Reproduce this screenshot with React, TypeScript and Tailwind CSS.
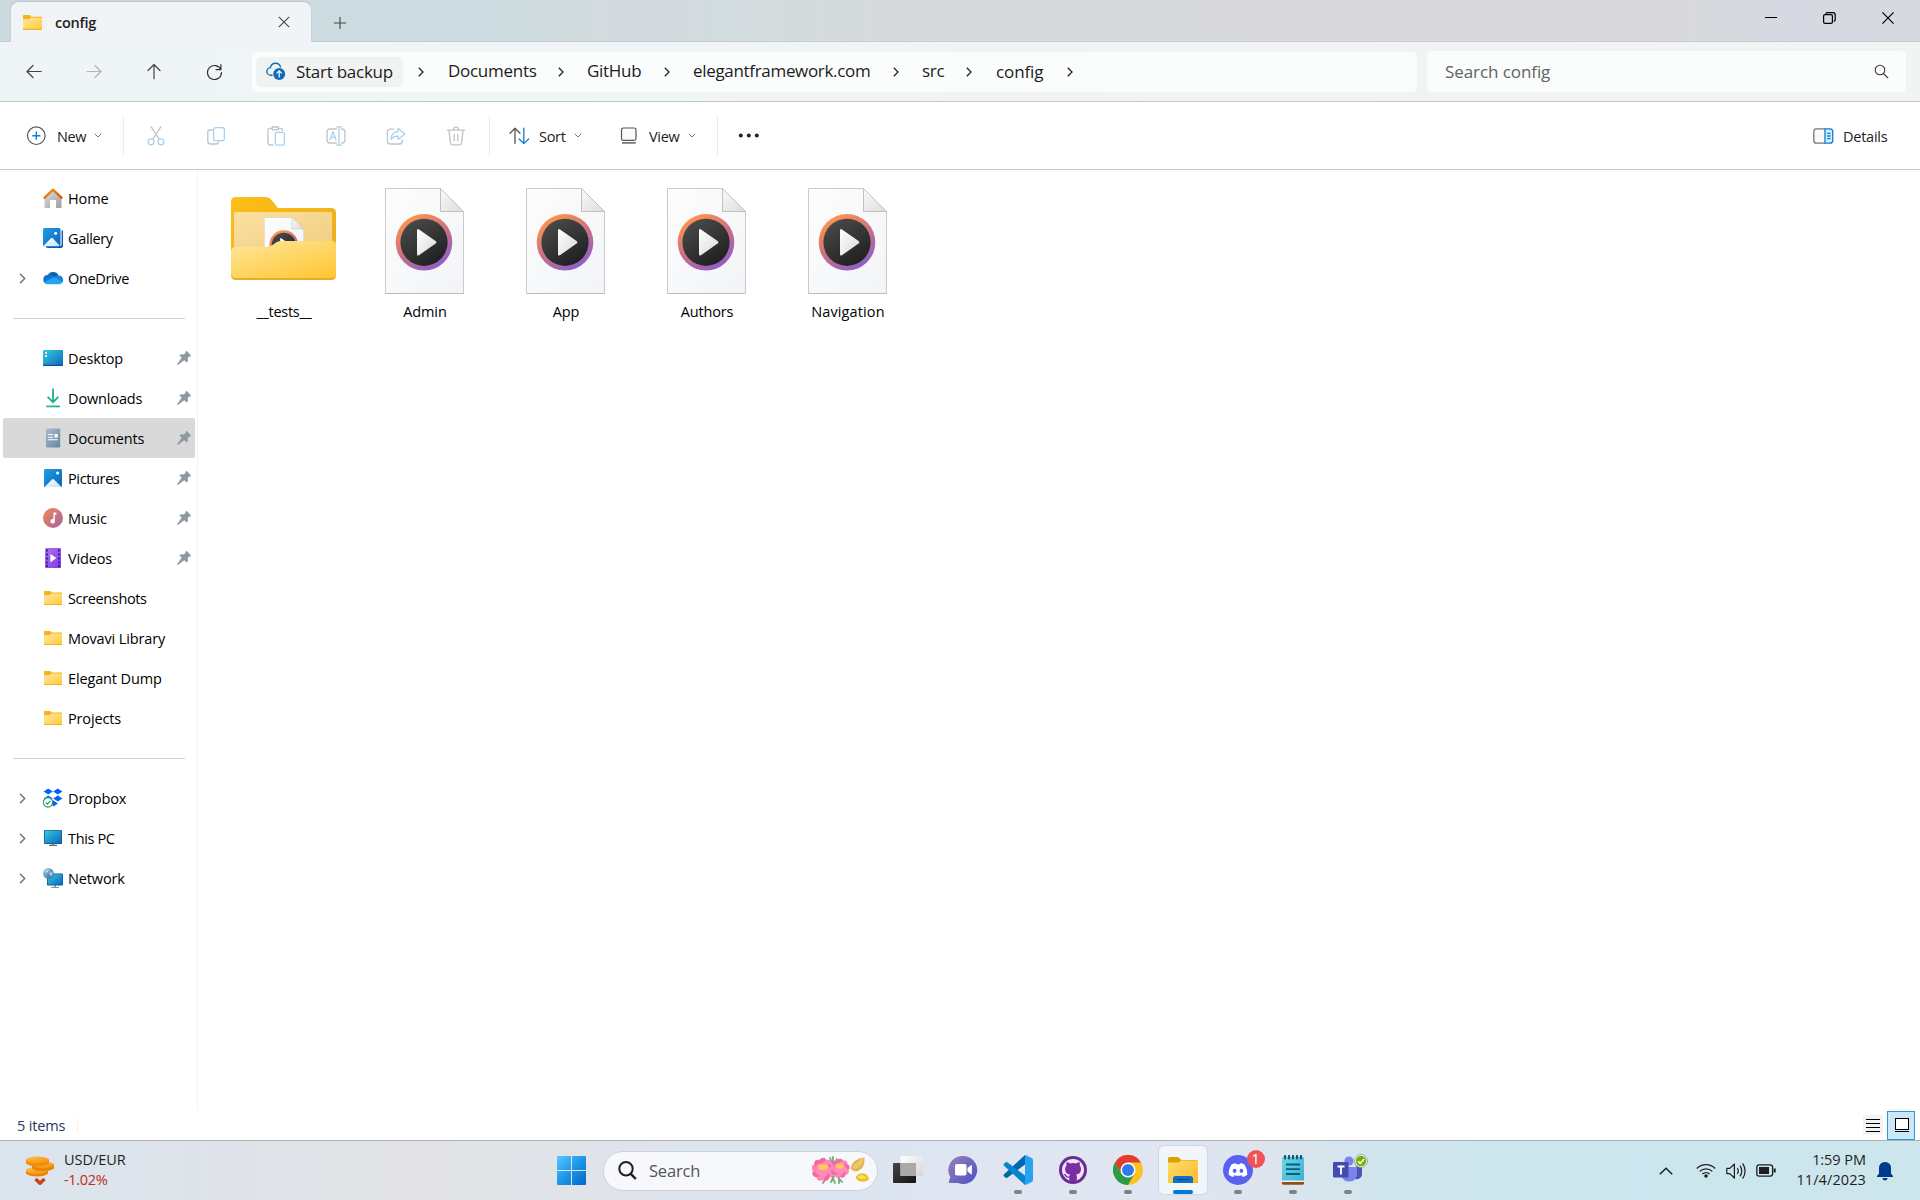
import React from "react";

type P = { className?: string };

const Chevron = ({ className = "" }: P) => (
  <svg className={className} viewBox="0 0 6 10" fill="none" stroke="currentColor" strokeWidth="1.3">
    <path d="M.8.8 5 5 .8 9.2" />
  </svg>
);

const Down = ({ className = "" }: P) => (
  <svg className={"h-[5px] w-2 shrink-0 " + className} viewBox="0 0 8 5" fill="none" stroke="#777" strokeWidth="1">
    <path d="M.8.8 4 4 7.2.8" />
  </svg>
);

const Folder = ({ className = "" }: P) => (
  <svg className={className} viewBox="0 0 18 14">
    <defs>
      <linearGradient id="fold" x1="0" y1="0" x2="1" y2="1">
        <stop offset="0" stopColor="#ffe9a0" />
        <stop offset="1" stopColor="#ffc937" />
      </linearGradient>
    </defs>
    <path d="M0 .8Q0 0 .8 0h5.5l1.6 1.6h9.3q.8 0 .8.8V12H0z" fill="#f5b41c" />
    <path d="M0 4h5.8l1.8-1.4H18v10.6q0 .8-.8.8H.8q-.8 0-.8-.8z" fill="url(#fold)" />
    <path d="M0 13h18v.2q0 .8-.8.8H.8q-.8 0-.8-.8z" fill="#efb225" />
  </svg>
);

/* ---------- title bar and navigation ---------- */

const TitleBar = () => (
  <div className="flex h-[42px] border-b border-[#c4cdd2] bg-[linear-gradient(90deg,#cddbe0_0%,#cddce1_25%,#d2dcde_31%,#d5d9e0_33%,#d2dcde_37%,#d7d9dc_50%,#d9d9dc_70%,#d9d9dc_87%,#d6d9e1_92%,#d7d9e1_100%)]">
    <div className="z-10 ml-[11px] mt-[2px] flex h-10 w-[300px] items-center rounded-t-lg bg-[#f0f4f6] shadow-[0_-1px_2px_rgba(120,140,150,0.25)]">
      <Folder className="ml-3 mt-px h-[15px] w-[19px]" />
      <span className="ml-[13px] w-[223px] translate-y-px text-[14.5px] font-semibold tracking-[-0.25px] text-[#222]">config</span>
      <svg className="h-3 w-3 shrink-0" viewBox="0 0 12 12" stroke="#444" strokeWidth="1.1">
        <path d="M.8.8l10.4 10.4M11.2.8.8 11.2" />
      </svg>
    </div>
    <svg className="ml-[23px] mt-[17px] h-3 w-3" viewBox="0 0 12 12" stroke="#444" strokeWidth="1.1">
      <path d="M6 0v12M0 6h12" />
    </svg>
    <div className="ml-auto mr-[26px] mt-3 flex h-3 gap-[46px]">
      <svg className="h-3 w-3" viewBox="0 0 12 12" stroke="#000" strokeWidth="1"><path d="M0 5.5h12" /></svg>
      <svg className="h-3 w-[13px]" viewBox="0 0 13 12" fill="none" stroke="#000" strokeWidth="1.2">
        <rect x=".6" y="2.7" width="8.8" height="8.7" rx="1.4" />
        <path d="M3 2.6V2q0-1.4 1.4-1.4h5.4q2.4 0 2.4 2.4v5q0 1.2-1.6 1.4" />
      </svg>
      <svg className="h-3 w-3" viewBox="0 0 12 12" stroke="#000" strokeWidth="1.2"><path d="M.4.4l11.2 11.2M11.6.4.4 11.6" /></svg>
    </div>
  </div>
);

const NavIcon = ({ d, color }: { d: string; color: string }) => (
  <svg className="h-4 w-4 shrink-0" viewBox="0 0 16 16" fill="none" stroke={color} strokeWidth="1.2" strokeLinecap="round" strokeLinejoin="round">
    <path d={d} />
  </svg>
);

const crumbs = [
  { name: "Documents", cls: "w-[90px] ml-[24px] mr-[20px] tracking-[-0.28px] -translate-y-px" },
  { name: "GitHub", cls: "w-[56px] ml-[23px] mr-[21px] tracking-[-0.3px] -translate-y-px" },
  { name: "elegantframework.com", cls: "w-[180px] ml-[23px] mr-[20px] tracking-[-0.32px] -translate-y-px" },
  { name: "src", cls: "w-[24px] ml-[23px] mr-[20px] tracking-[-0.3px] -translate-y-px" },
  { name: "config", cls: "w-[50px] ml-[24px] mr-[21px] tracking-[-0.1px]" },
];

const NavBar = () => (
  <div className="flex h-[60px] items-center border-b border-[#c2c9ce] bg-[linear-gradient(90deg,#eff4f6_0%,#f0f5f7_35%,#f1f2f5_50%,#f2f3f5_100%)]">
    <div className="ml-[26px] flex w-[226px] gap-11">
      <NavIcon color="#444" d="M15.200 7.500H1M7 1.500 1 7.500l6 6" />
      <NavIcon color="#b3b6b8" d="M1 7.500h14.200M9 1.500l6 6-6 6" />
      <NavIcon color="#444" d="M8 14.700V.6M2 6.500l6-6 6 6" />
      <NavIcon color="#333" d="M14.900 5.700A7 7 0 1 0 15.500 8.500M14.900.7v5h-4.800" />
    </div>
    <div className="flex h-10 w-[1165px] shrink-0 items-center rounded-[5px] bg-[#fbfdfd] pl-1">
      <div className="flex h-[30px] w-[147px] items-center rounded-[5px] bg-[#f1f3f3]">
        <svg className="ml-[10px] h-[19px] w-[20px] shrink-0" viewBox="0 0 20 19">
          <path d="M6.500 13.200H5a3.800 3.800 0 0 1-.6-7.600C5 2.800 7 1.200 9.600 1.200s4.500 1.700 5.100 4.200" fill="none" stroke="#0f6cbd" strokeWidth="1.4" />
          <circle cx="13.2" cy="12" r="6" fill="#0f6cbd" />
          <path d="M13.200 15.400V9M10.600 11.400l2.600-2.600 2.600 2.600" fill="none" stroke="#fff" strokeWidth="1.2" />
        </svg>
        <span className="ml-[10px] whitespace-nowrap text-[17px] tracking-[-0.26px] text-[#1b1b1b]">Start backup</span>
      </div>
      <Chevron className="ml-[15px] h-[10px] w-[6px] shrink-0 text-[#222]" />
      {crumbs.map((c) => (
        <React.Fragment key={c.name}>
          <span className={"shrink-0 whitespace-nowrap text-[17px] text-[#1b1b1b] " + c.cls}>{c.name}</span>
          <Chevron className="h-[10px] w-[6px] shrink-0 text-[#222]" />
        </React.Fragment>
      ))}
    </div>
    <div className="ml-[10px] flex h-[41px] w-[479px] items-center justify-between rounded-[5px] bg-[#fbfdfd] pl-[18px] pr-[17px]">
      <span className="text-[17px] tracking-[-0.08px] text-[#606262]">Search config</span>
      <svg className="h-[15px] w-[15px]" viewBox="0 0 15 15" fill="none" stroke="#333" strokeWidth="1.1">
        <circle cx="6" cy="6" r="4.8" /><path d="m9.5 9.5 4.6 4.6" />
      </svg>
    </div>
  </div>
);

/* ---------- command bar ---------- */

const G = "#c3c3c3";
const B = "#a5d2f2";

const Tool = ({ children }: { children: React.ReactNode }) => (
  <svg className="h-5 w-5 shrink-0" viewBox="0 0 20 20" fill="none" strokeWidth="1.3" strokeLinecap="round" strokeLinejoin="round">
    {children}
  </svg>
);
const Divider = ({ className = "" }: P) => <div className={"h-10 w-px shrink-0 bg-[#ececec] " + className} />;

const Toolbar = () => (
  <div className="flex h-[68px] items-center border-b border-[#c3c9ce] bg-white text-[14.5px] text-[#222]">
    <div className="flex w-[123px] items-center">
      <svg className="ml-[26px] h-5 w-5 shrink-0" viewBox="0 0 20 20" fill="none" strokeWidth="1.2">
        <circle cx="10.300" cy="9.700" r="8.800" stroke="#555" />
        <path d="M10.300 5.600v8.200M6.200 9.700h8.200" stroke="#0f7bd4" strokeWidth="1.4" />
      </svg>
      <span className="ml-[11px] w-[37px] translate-y-px tracking-[-0.35px]">New</span>
      <Down />
    </div>
    <Divider />
    <div className="ml-[22px] flex w-[343px] gap-10">
      <Tool>
        <path d="M5.2.8 13 13M14.8.8 7 13" stroke={G} />
        <circle cx="5" cy="15.8" r="3" stroke={B} /><circle cx="15" cy="15.8" r="3" stroke={B} />
      </Tool>
      <Tool>
        <path d="M6.5 4H4Q1.8 4 1.8 6.2v9q0 2.8 2.8 2.8h5.6q1.8 0 2.2-2" stroke={G} />
        <rect x="7.6" y="1.6" width="10.8" height="13" rx="2.2" stroke={B} />
      </Tool>
      <Tool>
        <path d="M7 19H4Q2 19 2 17V4.4q0-2 2-2h2M12.5 2.4h2q2 0 2 2M6.2 1h6v2.8h-6z" stroke={G} />
        <rect x="9.4" y="6.4" width="9" height="12.8" rx="1.6" stroke={B} />
      </Tool>
      <Tool>
        <path d="M10.5 3H4Q1 3 1 6v8q0 3 3 3h6.5M15.6 3Q19 3 19 6v8q0 3-3.4 3" stroke={G} />
        <path d="M13 1v18M10.8.8h4.6M10.8 19.2h4.6M4 14l3-8.4L10 14M5 11.4h4" stroke={B} />
      </Tool>
      <Tool>
        <path d="M7.6 3.2H4.4q-3 0-3 3V15q0 3 3 3h9q3 0 3-3v-.8" stroke={G} />
        <path d="M12 2.2 18.8 8 12 13.4v-3.2q-4.4-.2-7 3Q5.400 6 12 5.400z" stroke={B} />
      </Tool>
      <Tool>
        <path d="M1.400 4.200h17.200M7.500 4q.2-2.800 2.500-2.800T12.500 4M3 4.400l1.400 12.400q.2 2 2.200 2h6.800q2 0 2.200-2L17 4.400M8.200 8.500v6M11.800 8.500v6" stroke={G} />
      </Tool>
    </div>
    <Divider />
    <svg className="ml-[19px] h-[18px] w-[21px]" viewBox="0 0 21 18" fill="none" strokeWidth="1.3" strokeLinecap="round" strokeLinejoin="round">
      <path d="M6 16.500V1.200M1 6.200l5-5 5 5" stroke="#555" />
      <path d="M14.800 1.200v15.300M10.200 12l4.600 4.600L19.600 12" stroke="#0f7bd4" />
    </svg>
    <span className="ml-[9px] w-[36px] translate-y-px tracking-[-0.3px]">Sort</span>
    <Down className="-translate-x-px" />
    <svg className="ml-[37px] h-[17px] w-[18px]" viewBox="0 0 18 17" fill="none" stroke="#555" strokeWidth="1.2">
      <rect x="1.500" y="1" width="14.500" height="12.400" rx="1.800" fill="#fafafa" /><path d="M2 15.900h13.800" strokeWidth="1.400" />
    </svg>
    <span className="ml-[11px] w-[39px] translate-y-px tracking-[-0.3px]">View</span>
    <Down />
    <Divider className="ml-[21px]" />
    <svg className="ml-5 h-[5px] w-[22px]" viewBox="0 0 22 5" fill="#222">
      <circle cx="2.800" cy="2.500" r="2" /><circle cx="10.800" cy="2.500" r="2" /><circle cx="18.800" cy="2.500" r="2" />
    </svg>
    <svg className="ml-auto h-4 w-[21px]" viewBox="0 0 21 16" fill="none" strokeWidth="1.300">
      <path d="M12 .8H3.500Q.8.800.8 3.500v9q0 2.700 2.700 2.700H12" stroke="#777" fill="#fafafa" />
      <path d="M12 .8h5q2.700 0 2.700 2.700v9q0 2.700-2.700 2.700h-5z" stroke="#0f7bd4" fill="#d9effc" />
      <path d="M14.200 5.300h3.400M14.200 8h3.400M14.200 10.700h3.400" stroke="#0f7bd4" />
    </svg>
    <span className="ml-[9px] mr-[32px] w-[45px] translate-y-px tracking-[-0.25px]">Details</span>
  </div>
);

/* ---------- sidebar ---------- */

const Grad = ({ id, a, b }: { id: string; a: string; b: string }) => (
  <linearGradient id={id} x1="0" y1="0" x2="1" y2="1">
    <stop offset="0" stopColor={a} /><stop offset="1" stopColor={b} />
  </linearGradient>
);

const sideIcons: Record<string, React.ReactNode> = {
  home: (
    <>
      <defs><Grad id="hm" a="#dcdcdc" b="#a0a0a0" /><Grad id="hr" a="#f59a12" b="#d94a0c" /></defs>
      <path d="M1.500 9 10 2l8.500 7v10.200q0 .8-.8.800H13v-8H7v8H2.300q-.8 0-.8-.800z" fill="url(#hm)" />
      <path d="M.8 10.400 10 1.600l9.200 8.800" fill="none" stroke="url(#hr)" strokeWidth="2.200" strokeLinejoin="round" />
    </>
  ),
  gallery: (
    <>
      <defs><Grad id="gl" a="#1f9fe6" b="#0a62bb" /><Grad id="gm" a="#ffffff" b="#c4e3f8" /></defs>
      <path d="M3 18h14q1.600 0 1.600-1.600V2.500H20V18q0 2-2 2H4.500Q3 20 3 18z" fill="#0c5ca8" />
      <rect width="17.500" height="18.200" rx="1.500" fill="url(#gl)" />
      <path d="m.8 17.600 7.200-7.400q.9-.8 1.800 0l6.800 7.400q-.4.600-1.200.600H1.800q-.7 0-1-.600z" fill="url(#gm)" />
      <circle cx="12.600" cy="5.200" r="1.500" fill="#fff" />
    </>
  ),
  onedrive: (
    <>
      <path d="M4.600 7.400a6.200 6.200 0 0 1 11 0l-4 5L3 9z" fill="#0a5fb4" />
      <path d="M4.500 7q4-1.500 8 2l-9 6.800A4.500 4.500 0 0 1 4.500 7z" fill="#0f74d0" />
      <path d="M11 10q2-3.200 5-2.400A4.200 4.200 0 0 1 19.200 14.500L9 12z" fill="#1687dd" />
      <path d="M1.500 14.400q2-2 9.800-5.200l8.200 4.800q-1 2.200-3.200 2.200H4.500q-2 0-3-1.800z" fill="#27a5ec" />
    </>
  ),
  desktop: (
    <>
      <defs><Grad id="dk" a="#35cbe0" b="#0b67bd" /></defs>
      <rect y="2" width="20" height="16" rx="1" fill="url(#dk)" />
      <path d="M0 16.800h20V17q0 1-1 1H1q-1 0-1-1z" fill="#0a4f97" />
      <path d="M2.200 4h1.800v1.800H2.200zM2.200 7.200h1.800V9H2.200z" fill="#fff" />
    </>
  ),
  downloads: (
    <>
      <defs><Grad id="dl" a="#3fc99a" b="#0a9c8a" /></defs>
      <path d="M10 .6v13.200M4.600 8.800 10 14.200l5.400-5.400" fill="none" stroke="#1bb08f" strokeWidth="1.800" />
      <rect x="3" y="17.400" width="14" height="1.800" rx=".6" fill="url(#dl)" />
    </>
  ),
  documents: (
    <>
      <defs><Grad id="dc" a="#a9bdd3" b="#66849f" /></defs>
      <rect x="3" y=".5" width="14.200" height="19" rx="1.200" fill="url(#dc)" />
      <path d="M5.200 6.500h5M5.200 9.200h5M5.200 11.800h9.600" stroke="#fff" strokeWidth="1.100" />
      <rect x="11.500" y="6" width="3.300" height="3.600" fill="#fff" />
    </>
  ),
  pictures: (
    <>
      <defs><Grad id="pc" a="#1f9fe6" b="#0a62bb" /><Grad id="pm" a="#ffffff" b="#c4e3f8" /></defs>
      <rect x="1" y="1" width="18" height="18" rx="1.200" fill="url(#pc)" />
      <path d="m2 18.400 7-7q1-.8 2 0l7 7q-.2.600-1 .600H3q-.8 0-1-.600z" fill="url(#pm)" />
      <circle cx="14.600" cy="5" r="1.600" fill="#fff" />
    </>
  ),
  music: (
    <>
      <defs><Grad id="mu" a="#f08a4b" b="#a763a6" /></defs>
      <circle cx="10" cy="10" r="10" fill="url(#mu)" />
      <path d="M10.400 4.500h3v2.200h-1.500v6.500a2.200 2.200 0 1 1-1.500-2z" fill="#fff" />
    </>
  ),
  videos: (
    <>
      <defs><Grad id="vd" a="#b072f4" b="#7c3be0" /></defs>
      <rect x="2" y="0" width="16" height="20" rx="1" fill="url(#vd)" />
      <path d="M3 2.500h2M3 6.500h2M3 10.500h2M3 14.500h2M3 18h2M15 2.500h2M15 6.500h2M15 10.500h2M15 14.500h2M15 18h2" stroke="#43208a" strokeWidth="1.800" />
      <path d="m7.400 6 6 4-6 4.200z" fill="#fff" />
    </>
  ),
  dropbox: (
    <>
      <path d="m5.200.5 4.600 3-4.600 3-4.600-3zM14.800.5l4.600 3-4.600 3-4.600-3zM5.200 7.500l4.600 3-4.600 3-4.600-3zM14.800 7.500l4.600 3-4.600 3-4.600-3zM10.500 12.600l4.400 3-4 2.600-4.500-3z" fill="#0061fe" />
      <circle cx="5" cy="14.400" r="4.700" fill="#fff" stroke="#1f9d62" strokeWidth="1.100" />
      <path d="m2.800 14.500 1.600 1.600 2.900-3.200" fill="none" stroke="#1f9d62" strokeWidth="1.200" />
    </>
  ),
  pc: (
    <>
      <defs><Grad id="tp" a="#32cbdc" b="#0b66bf" /></defs>
      <path d="M8.500 16h3v2h-3z" fill="#9aa5ad" /><path d="M6 16.800h8V18H6z" fill="#5e6870" />
      <rect x="1" y="2" width="18" height="14" rx=".8" fill="#0a5b9e" />
      <rect x="1.800" y="2.600" width="16.400" height="12.600" fill="url(#tp)" />
    </>
  ),
  network: (
    <>
      <defs><Grad id="nw" a="#32cbdc" b="#0b66bf" /><Grad id="gb" a="#a9d4ec" b="#275f90" /></defs>
      <path d="M11 17h2v2h-2z" fill="#9aa5ad" /><path d="M8 19h8v1H8z" fill="#8c969e" />
      <rect x="4" y="5.500" width="16" height="12" rx=".8" fill="#0a5b9e" />
      <rect x="4.800" y="6.300" width="14.400" height="10.400" fill="url(#nw)" />
      <circle cx="5.400" cy="5.400" r="5.400" fill="url(#gb)" />
      <path d="M2 3q2-2 4-1.500L5 4 3 5zM6 5l3-1 1 2-2 3z" fill="#dbeef8" opacity=".6" />
    </>
  ),
};

type Row = { label: string; icon: string; pin?: boolean; chev?: boolean; sel?: boolean; tight?: boolean };
const groups: Row[][] = [
  [
    { label: "Home", icon: "home" },
    { label: "Gallery", icon: "gallery", tight: true },
    { label: "OneDrive", icon: "onedrive", chev: true, tight: true },
  ],
  [
    { label: "Desktop", icon: "desktop", pin: true },
    { label: "Downloads", icon: "downloads", pin: true },
    { label: "Documents", icon: "documents", pin: true, sel: true },
    { label: "Pictures", icon: "pictures", pin: true, tight: true },
    { label: "Music", icon: "music", pin: true },
    { label: "Videos", icon: "videos", pin: true },
    { label: "Screenshots", icon: "folder", tight: true },
    { label: "Movavi Library", icon: "folder" },
    { label: "Elegant Dump", icon: "folder" },
    { label: "Projects", icon: "folder" },
  ],
  [
    { label: "Dropbox", icon: "dropbox", chev: true },
    { label: "This PC", icon: "pc", chev: true, tight: true },
    { label: "Network", icon: "network", chev: true },
  ],
];

const Sidebar = () => (
  <div className="w-[198px] shrink-0 border-r border-[#f5f5f5] pt-2">
    {groups.map((g, i) => (
      <React.Fragment key={i}>
        {i > 0 && (
          <div className="h-10 pl-[13px] pt-5"><div className="h-px w-[172px] bg-[#d2d2d2]" /></div>
        )}
        {g.map((r) => (
          <div key={r.label} className={"ml-[3px] flex h-10 w-[192px] items-center rounded-[2px] pl-4 " + (r.sel ? "bg-[#d9d9d9]" : "")}>
            <span className="w-6 shrink-0">{r.chev && <Chevron className="h-[11px] w-[7px] text-[#777]" />}</span>
            {r.icon === "folder" ? (
              <Folder className="mx-px h-[14px] w-[18px] shrink-0" />
            ) : (
              <svg className="h-5 w-5 shrink-0" viewBox="0 0 20 20">{sideIcons[r.icon]}</svg>
            )}
            <span className={"ml-[5px] w-[109px] shrink-0 translate-y-px whitespace-nowrap text-[14.5px] text-black " + (r.tight ? "tracking-[-0.36px]" : "tracking-[-0.14px]")}>{r.label}</span>
            {r.pin && (
              <svg className="h-[14px] w-[14px] shrink-0" viewBox="0 0 13 13" fill="#8e9aa2">
                <path d="M8.200.3q.7-.5 1.300.1l3.200 3.200q.5.600 0 1.200-.7.500-1.400.2L9.900 6.600q.9 2.600-.8 4.100L6.700 8.600.8 13 0 12.300 4.400 6.300 2.100 4q1.600-1.500 4.100-.8l1.900-1.500Q7.800.8 8.200.3z" />
              </svg>
            )}
          </div>
        ))}
      </React.Fragment>
    ))}
  </div>
);

/* ---------- files ---------- */

const MediaDoc = ({ className = "" }: P) => (
  <svg className={className} viewBox="0 0 79 106">
    <defs>
      <Grad id="page" a="#fdfdfd" b="#f2f4f7" />
      <Grad id="curl" a="#fafafa" b="#dcdcdc" />
      <linearGradient id="ring" x1=".2" y1=".05" x2=".75" y2="1">
        <stop offset="0" stopColor="#ff9648" /><stop offset=".5" stopColor="#c96f86" /><stop offset="1" stopColor="#875dd0" />
      </linearGradient>
      <linearGradient id="disc" x1=".2" y1="0" x2=".8" y2="1">
        <stop offset="0" stopColor="#4b4b4b" /><stop offset="1" stopColor="#1d1d1d" />
      </linearGradient>
      <Grad id="tri" a="#ffffff" b="#d9d9d9" />
    </defs>
    <path d="M.5.5h55l23 23v82H.5z" fill="url(#page)" stroke="#cacaca" />
    <path d="M.5 105.500h78" stroke="#bcbcbc" />
    <path d="M55.500.5v23h23z" fill="url(#curl)" stroke="#c0c0c0" strokeLinejoin="round" />
    <circle cx="39" cy="54.300" r="28.300" fill="url(#ring)" />
    <circle cx="39" cy="54.300" r="23.600" fill="url(#disc)" />
    <path d="M32 42.500q0-2.300 2-1.100l16.600 11.700q1.500 1.200 0 2.400L34 67.200q-2 1.200-2-1.100z" fill="url(#tri)" />
  </svg>
);

const BigFolder = () => (
  <div className="relative h-[83px] w-[105px]">
    <svg className="absolute inset-0 h-[83px] w-[105px]" viewBox="0 0 105 83">
      <defs>
        <Grad id="fb" a="#fdbf17" b="#eaa91f" />
        <Grad id="fi" a="#fbe0a0" b="#efcd80" />
      </defs>
      <path d="M0 5q0-5 5-5h29q4 0 6.500 3l6.500 8h53q5 0 5 5v60H0z" fill="url(#fb)" />
      <path d="M3 17q0-2 2-2h94q2 0 2 2v45H3z" fill="url(#fi)" />
    </svg>
    <div className="absolute left-[33px] top-[20px] h-[40px] w-[40px] overflow-hidden">
      <MediaDoc className="h-[54px] w-10" />
    </div>
    <svg className="absolute inset-0 h-[83px] w-[105px]" viewBox="0 0 105 83">
      <defs>
        <linearGradient id="ff" x1=".1" y1="0" x2=".9" y2="1">
          <stop offset="0" stopColor="#ffe597" /><stop offset="1" stopColor="#ffc734" />
        </linearGradient>
      </defs>
      <path d="M0 54h105v24q0 5-5 5H5q-5 0-5-5z" fill="#e8ac2b" />
      <path d="M0 54.500Q0 50 4.500 50h30q4 0 7-2l4-2.800q2-1.200 5-1.200H101q4 0 4 4v28q0 5-5 5H5q-5 0-5-5z" fill="url(#ff)" />
    </svg>
  </div>
);

const Files = () => (
  <div className="flex items-start pl-[15px] pt-[18px]">
    {["__tests__", "Admin", "App", "Authors", "Navigation"].map((n, i) => (
      <div key={n} className="flex w-[141px] flex-col items-center">
        <div className={"flex h-[106px] items-start " + (i ? "" : "pt-[9px]")}>
          {i ? <MediaDoc className="h-[106px] w-[79px]" /> : <BigFolder />}
        </div>
        <span className={"ml-px mt-[7px] text-[14.5px] leading-[21px] text-black " + (i === 0 ? "tracking-[-0.3px]" : i === 4 ? "tracking-[0.12px]" : "tracking-[-0.14px]")}>{n}</span>
      </div>
    ))}
  </div>
);

/* ---------- status bar ---------- */

const StatusBar = () => (
  <div className="flex h-[30px] shrink-0 items-center bg-white pl-[17px] pr-[5px]">
    <span className="w-[60px] translate-y-px text-[14.5px] tracking-[-0.14px] text-[#1e395b]">5 items</span>
    <div className="h-[14px] w-px bg-[#f0f0f0]" />
    <div className="ml-auto flex h-5 w-5 flex-col items-center justify-center gap-[3px] bg-[#f3f3f3]">
      <div className="h-px w-[14px] bg-black" /><div className="h-px w-[14px] bg-black" />
      <div className="h-px w-[14px] bg-black" /><div className="h-px w-[14px] bg-black" />
    </div>
    <div className="ml-1 flex h-[29px] w-7 flex-col items-center justify-center gap-px border border-[#2a9bd6] bg-[#cbe8f6] pl-[2px]">
      <div className="h-3 w-[14px] border border-black bg-white" /><div className="h-px w-[14px] bg-black" />
    </div>
  </div>
);

/* ---------- taskbar ---------- */

const Coins = () => (
  <svg className="h-[30px] w-[29px]" viewBox="0 0 29 30">
    <defs><Grad id="cn" a="#ffc04a" b="#f58f0a" /></defs>
    <path d="M0 14.500v3q3 3 11 3t11-3v-3z" fill="#e88409" /><ellipse cx="11" cy="14.500" rx="11" ry="3.400" fill="url(#cn)" />
    <path d="M6 8.500v4q3 2.500 11 2.500t11-2.500v-4z" fill="#e88409" /><ellipse cx="17" cy="8.800" rx="11" ry="3.200" fill="url(#cn)" />
    <path d="M0 3.800v3.600q3 3 11.500 3T23 7.400V3.800z" fill="#f08f0c" /><ellipse cx="11.500" cy="3.800" rx="11.500" ry="3.400" fill="url(#cn)" />
    <path d="m9.500 23 4.500 4.200 4.500-4.200" fill="none" stroke="#c8421a" strokeWidth="3.400" strokeLinejoin="round" />
  </svg>
);

const Petals = ({ cx, cy, r }: { cx: number; cy: number; r: number }) => (
  <g>
    {[0, 40, 80, 120, 160, 200, 240, 280, 320].map((a) => (
      <ellipse key={a} cx={cx} cy={cy - r * 0.58} rx={r * 0.36} ry={r * 0.44} fill={a % 80 ? "#ff86b8" : "#fa66a3"} transform={`rotate(${a} ${cx} ${cy})`} />
    ))}
    {[20, 92, 164, 236, 308].map((a) => (
      <ellipse key={a} cx={cx} cy={cy - r * 0.3} rx={r * 0.3} ry={r * 0.36} fill="#ff8dba" transform={`rotate(${a} ${cx} ${cy})`} />
    ))}
    <ellipse cx={cx} cy={cy - 2.500} rx={r * 0.42} ry={r * 0.28} fill="#ffc85a" />
  </g>
);

const Flowers = () => (
  <svg className="h-[30px] w-[58px] shrink-0" viewBox="0 0 58 30">
    <path d="m21 9-3-7M21 9V1M22 9l3-6M14 22l-3 5M20 20l3 7M25 20l5 6M22 20l-3 6M27 21v6" stroke="#7da57c" strokeWidth="1.800" strokeLinecap="round" fill="none" />
    <Petals cx={11} cy={13.500} r={11.500} />
    <Petals cx={28} cy={12.500} r={9.500} />
    <path d="M38.500 12.500Q40 3 52.500 1.500q1 11-7 13.500-4 1-7-2.500z" fill="#e2b34c" />
    <path d="M40 12q4-7 12-10-1.500 8-7.500 10.500-2.500.8-4.500-.5z" fill="#efc768" />
    <path d="M43.500 21q4-5 9-3.500 4 1.500 4.500 6-5 3.500-10 1.500-3-1.200-3.500-4z" fill="#edc21f" />
    <path d="m45 21 5-2 5 3-5 1z" fill="#fbe36a" />
  </svg>
);

const chrome = (
  <>
    <circle cx="15" cy="15" r="15" fill="#fcc31e" />
    <path d="M15 7.500h13A15 15 0 0 0 2 7.500l6.500 11.200z" fill="#e33b2e" />
    <path d="m8.500 18.700 6.500 3.800 6.500-3.800L15 30A15 15 0 0 1 2 7.500z" fill="#2a9b48" />
    <circle cx="15" cy="15" r="7.500" fill="#fff" /><circle cx="15" cy="15" r="6" fill="#2f7bed" />
  </>
);

const taskIcons: { name: string; art: React.ReactNode; state: "none" | "open" | "active" }[] = [
  {
    name: "tasks", state: "none",
    art: (
      <>
        <defs><Grad id="tv" a="#454545" b="#141414" /><Grad id="tw" a="#ffffff" b="#d6d6d6" /></defs>
        <rect y="8" width="23" height="20" rx="1" fill="url(#tv)" />
        <rect x="7.500" y="1" width="22.500" height="20" rx="1" fill="url(#tw)" />
        <path d="M7.500 8H23v13H7.500z" fill="#a9a9a9" />
      </>
    ),
  },
  {
    name: "chat", state: "none",
    art: (
      <>
        <defs><Grad id="ch" a="#9a7fb8" b="#4a52c4" /></defs>
        <path d="M15 1a14 14 0 1 1-5 27H1.500q-1-.3-.6-1.300L2.300 22A14 14 0 0 1 15 1z" fill="url(#ch)" />
        <rect x="7" y="9" width="11.500" height="11.500" rx="1.800" fill="#fff" />
        <path d="m19.500 13 3.600-2.700q.8-.3.8.5v8q0 .8-.8.500l-3.600-2.700z" fill="#fff" />
      </>
    ),
  },
  {
    name: "code", state: "open",
    art: (
      <>
        <path d="M22 0 1 19.300q-1 1 0 2l1.700 1.500q.8.500 1.600 0L22 9.500z" fill="#0068ac" />
        <path d="M22 30 1 10.700q-1-1 0-2l1.700-1.500q.8-.5 1.600 0L22 20.500z" fill="#0885cf" />
        <path d="M22 0q1 0 1.700.4l5 2.600q1.300.6 1.300 2v20q0 1.400-1.300 2l-5 2.600Q23 30 22 29.800z" fill="#27a3f0" />
      </>
    ),
  },
  {
    name: "github", state: "open",
    art: (
      <>
        <circle cx="15" cy="15" r="14" fill="#6e2a97" />
        <circle cx="15" cy="15" r="11" fill="#efe6f4" />
        <path d="M11.200 25.600v-3q-3.400.6-4.200-1.800-.5-1-1.500-1.600 2-.5 3 1.200t2.800 1q.1-1.200.8-1.800-5-.6-5-5.600 0-2.200 1.400-3.500-.5-1.600.2-3.500 1.600 0 3.500 1.500 3-.8 5.800 0 2-1.500 3.500-1.500.7 1.900.2 3.500 1.300 1.300 1.300 3.500 0 5-5 5.600.9.800.9 2.700v3.300Q15 26.600 11.200 25.600z" fill="#7a2ea3" />
      </>
    ),
  },
  { name: "chrome", state: "open", art: chrome },
  {
    name: "explorer", state: "active",
    art: (
      <>
        <defs><Grad id="te" a="#ffdc6a" b="#fdb92b" /></defs>
        <path d="M0 3.500Q0 2 1.500 2h7.800q1.200 0 2 1l2 2h15.200q1.500 0 1.500 1.500V12H0z" fill="#e0a003" />
        <path d="M0 7.500h9.500q1.500 0 2.500-1l1-1h17V28H0z" fill="url(#te)" />
        <path d="M5 28v-4.500Q5 21 7.500 21h15q2.500 0 2.500 2.500V28z" fill="#0f6fc6" />
        <path d="M9 24.500h12" stroke="#0a4a8c" strokeWidth="1.300" />
      </>
    ),
  },
  {
    name: "discord", state: "open",
    art: (
      <>
        <circle cx="15" cy="15" r="15" fill="#5763f0" />
        <path d="M8.500 9.500Q11 8.200 12.700 8.300l.6 1h3.400l.6-1Q19 8.200 21.500 9.500q3.200 5 2.800 10.300-2.300 1.700-4.600 2.200l-1-1.700q-3.700 1-7.400 0l-1 1.700q-2.300-.5-4.600-2.200Q5.300 14.500 8.500 9.500z" fill="#fff" />
        <ellipse cx="11.600" cy="15.800" rx="1.900" ry="2.100" fill="#5763f0" /><ellipse cx="18.400" cy="15.800" rx="1.900" ry="2.100" fill="#5763f0" />
      </>
    ),
  },
  {
    name: "notepad", state: "open",
    art: (
      <>
        <defs><Grad id="np" a="#6fd6ea" b="#35b2cf" /></defs>
        <rect x="4" y="2" width="22" height="25.500" rx="1.500" fill="url(#np)" />
        <path d="M4 26h22v2.300q0 1.500-1.500 1.500h-19Q4 29.800 4 28.300z" fill="#9a4a13" /><path d="M4 25.500h22V27H4z" fill="#e9f3f5" />
        <path d="M8 9.500h14M8 14.200h14M8 19h14" stroke="#0a5f7c" strokeWidth="1.800" />
        <path d="M7 1v2.500M11 1v2.500M15 1v2.500M19 1v2.500M23 1v2.500" stroke="#0f5a70" strokeWidth="2.200" strokeLinecap="round" />
      </>
    ),
  },
  {
    name: "teams", state: "open",
    art: (
      <>
        <circle cx="26" cy="9" r="3.500" fill="#5059c9" />
        <path d="M20 12h9v8a5.500 5.500 0 0 1-7 4z" fill="#4b53bc" />
        <circle cx="16" cy="6" r="4.600" fill="#7b83eb" />
        <path d="M8.500 12H24v8a8 8 0 0 1-15.500 1z" fill="#7b83eb" />
        <rect x="0" y="7" width="15.500" height="15.500" rx="1.200" fill="#434bb0" />
        <path d="M4.500 11.500h7M8 11.500v8" stroke="#fff" strokeWidth="1.900" />
      </>
    ),
  },
];

const Taskbar = () => (
  <div className="flex h-[60px] shrink-0 items-center border-t border-[#a9b1b8] bg-[linear-gradient(90deg,#dbe5ed_0%,#dfe3e9_12%,#e3e3e6_22%,#dfe4ea_32%,#dde5f1_45%,#e1e7f2_60%,#dde4ee_66%,#cfe6ec_73%,#cbe6ee_85%,#cde6ec_100%)]">
    <div className="flex w-[557px] shrink-0 items-center pl-[26px]">
      <Coins />
      <div className="ml-[9px] -translate-y-px text-[14.5px] leading-5">
        <div className="tracking-[-0.05px] text-[#1f1f1f]">USD/EUR</div>
        <div className="tracking-[-0.3px] text-[#c42b1c]">-1.02%</div>
      </div>
    </div>
    <svg className="h-[29px] w-[29px] shrink-0" viewBox="0 0 29 29">
      <defs>
        <linearGradient id="wn" x1="0" y1="0" x2="29" y2="29" gradientUnits="userSpaceOnUse">
          <stop offset="0" stopColor="#54cbff" /><stop offset=".5" stopColor="#1c96e6" /><stop offset="1" stopColor="#0067c8" />
        </linearGradient>
      </defs>
      <path d="M1 0h13v14H0V1q0-1 1-1zM15 0h13q1 0 1 1v13H15zM0 15h14v14H1q-1 0-1-1zM15 15h14v13q0 1-1 1H15z" fill="url(#wn)" />
    </svg>
    <div className="ml-[17px] flex h-10 w-[275px] shrink-0 items-center rounded-full border border-[#ccd2dc] bg-[#f6f8fb] pl-[14px]">
      <svg className="h-[19px] w-[19px] shrink-0" viewBox="0 0 19 19" fill="none" stroke="#1f1f1f" strokeWidth="2">
        <circle cx="8" cy="7.800" r="6.700" /><path d="m12.600 12.600 5.200 5.400" strokeWidth="2.500" />
      </svg>
      <span className="ml-[12px] w-[163px] translate-y-px text-[16.5px] tracking-[-0.2px] text-[#555]">Search</span>
      <Flowers />
    </div>
    <div className="ml-[2px] flex shrink-0 -translate-y-px">
      {taskIcons.map((t) => (
        <div key={t.name} className="flex h-[59px] w-[55px] items-center justify-center">
          <div className={"relative flex h-12 w-12 justify-center pt-[9px] " + (t.state === "active" ? "rounded-[5px] bg-[#f2f6fb] shadow-[0_0_1px_1px_rgba(190,200,215,0.5)]" : "")}>
            <svg className="h-[30px] w-[30px]" viewBox="0 0 30 30">{t.art}</svg>
            {t.name === "discord" && (
              <div className="absolute left-[33px] top-[4px] flex h-[18px] w-[18px] items-center justify-center rounded-full bg-[#f05356] text-[15px] leading-none text-white">1</div>
            )}
            {t.name === "teams" && (
              <svg className="absolute left-[30px] top-[8px] h-[14px] w-[14px]" viewBox="0 0 14 14">
                <circle cx="7" cy="7" r="6.400" fill="#fff" stroke="#8a8a8a" strokeWidth=".8" />
                <circle cx="7" cy="7" r="5.200" fill="#6bb700" /><path d="m4 7.200 2.200 2.200 4-4.400" fill="none" stroke="#fff" strokeWidth="1.500" />
              </svg>
            )}
            {t.state !== "none" && (
              <div className={"absolute bottom-0 h-1 rounded-full " + (t.state === "active" ? "w-5 bg-[#0078d4]" : "w-2 bg-[#7e8287]")} />
            )}
          </div>
        </div>
      ))}
    </div>
    <div className="ml-auto mr-[27px] flex items-center">
      <svg className="h-2 w-[14px]" viewBox="0 0 14 8" fill="none" stroke="#1f1f1f" strokeWidth="1.500"><path d="M.8 7.200 7 1.200l6.200 6" /></svg>
      <svg className="ml-[23px] h-[15px] w-5" viewBox="0 0 20 15" fill="none" stroke="#1f1f1f" strokeWidth="1.300">
        <path d="M.8 5.500a13 13 0 0 1 18.400 0M3.700 8.400a9 9 0 0 1 12.600 0M6.400 11a5.200 5.200 0 0 1 7.200 0" />
        <circle cx="10" cy="13" r="1.800" fill="#1f1f1f" stroke="none" />
      </svg>
      <svg className="ml-[10px] h-[18px] w-5" viewBox="0 0 20 18" fill="none" stroke="#1f1f1f" strokeWidth="1.200">
        <path d="M.8 6.400v5.200h3L8.400 16V2L3.800 6.400z" strokeLinejoin="round" />
        <path d="M11.300 6q2 3 0 6M14 3.700q3.600 5.300 0 10.600M16.600 1.400q5 7.600 0 15.200" />
      </svg>
      <svg className="ml-[10px] h-[13px] w-5" viewBox="0 0 20 13" fill="none" stroke="#1f1f1f" strokeWidth="1.300">
        <rect x=".8" y=".8" width="15.800" height="11.400" rx="2.400" /><path d="M3 3h10v7H3z" fill="#1f1f1f" stroke="none" /><path d="M18.700 4.500v4" strokeWidth="2" />
      </svg>
      <div className="ml-[16px] flex w-[74px] -translate-y-px flex-col items-end whitespace-nowrap text-[14.5px] leading-5 text-[#1f1f1f]">
        <div className="tracking-[-0.05px]">1:59 PM</div>
        <div className="tracking-[0.1px]">11/4/2023</div>
      </div>
      <svg className="ml-[11px] h-[20px] w-4" viewBox="0 0 16 20" fill="#003a8f">
        <path d="M8 1q6 0 6 6.500v5l2 2.500v1H0v-1l2-2.500v-5Q2 1 8 1z" /><path d="M5.300 17h5.400q-.6 2.500-2.700 2.500T5.300 17z" />
      </svg>
    </div>
  </div>
);

export default function App() {
  return (
    <div className="flex h-[1200px] w-[1920px] flex-col overflow-hidden bg-white font-['Open_Sans','Noto_Sans',sans-serif]">
      <TitleBar />
      <NavBar />
      <Toolbar />
      <div className="flex min-h-0 flex-1">
        <Sidebar />
        <Files />
      </div>
      <StatusBar />
      <Taskbar />
    </div>
  );
}
